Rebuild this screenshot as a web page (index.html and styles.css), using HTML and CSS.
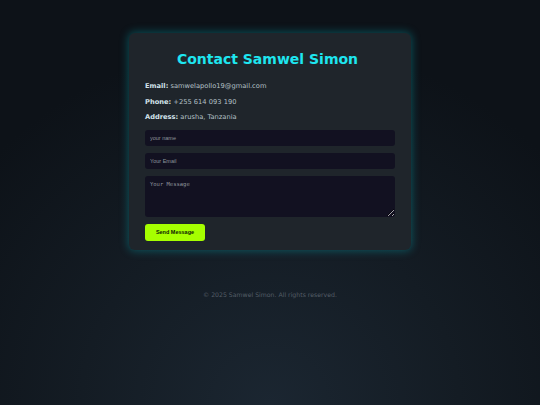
FILE: index.html
```html
<!DOCTYPE html>
<html lang="en">
<head>
<meta charset="utf-8">
<title>Contact Samwel Simon</title>
<link rel="stylesheet" href="styles.css">
</head>
<body>
<main class="page">
  <section class="card">
    <h1 class="title">Contact Samwel Simon</h1>
    <p class="info"><strong>Email:</strong> samwelapollo19@gmail.com</p>
    <p class="info"><strong>Phone:</strong> +255 614 093 190</p>
    <p class="info"><strong>Address:</strong> arusha, Tanzania</p>
    <form class="form">
      <input class="field" type="text" placeholder="your name">
      <input class="field" type="email" placeholder="Your Email">
      <textarea class="field area" placeholder="Your Message"></textarea>
      <button class="send" type="button">Send Message</button>
    </form>
  </section>
  <footer class="footer">© 2025 Samwel Simon. All rights reserved.</footer>
</main>
</body>
</html>
```

FILE: styles.css
```css
html, body {
  margin: 0;
  height: 100%;
}
body {
  background: radial-gradient(ellipse 70% 90% at 50% 100%, #1b2631 0%, #141c24 50%, #0d1218 100%);
  font-family: "DejaVu Sans", Verdana, sans-serif;
  color: #c5d3da;
}
.page {
  display: flex;
  flex-direction: column;
  align-items: center;
  padding-top: 33px;
}
.card {
  width: 250px;
  padding: 16px 16px 9px;
  background: #1f252b;
  border-radius: 6px;
  box-shadow: 0 0 8px 1px rgba(0, 190, 200, 0.35);
}
.title {
  margin: 2px 0 15px;
  padding-right: 5px;
  text-align: center;
  font-size: 14px;
  font-weight: bold;
  color: #1ee6f0;
}
.info {
  margin: 0 0 7px;
  font-size: 6.7px;
  line-height: 8.5px;
  color: #b4c0c7;
}
.info strong {
  color: #d2e2ea;
}
.form {
  display: flex;
  flex-direction: column;
  align-items: flex-start;
  gap: 7px;
  margin-top: 8px;
}
.field {
  box-sizing: border-box;
  width: 250px;
  height: 16px;
  padding: 0 5px;
  border: none;
  border-radius: 3px;
  background: #121121;
  color: #c5d3da;
  font-family: "Liberation Sans", Arial, sans-serif;
  font-size: 5.5px;
  outline: none;
}
.field::placeholder {
  color: #8e949c;
}
.area {
  height: 41px;
  padding: 5px;
  font-family: "DejaVu Sans Mono", monospace;
  font-size: 5.5px;
  resize: vertical;
}
.send {
  width: 60px;
  height: 17px;
  padding: 0;
  border: none;
  border-radius: 3px;
  background: #a6ff00;
  color: #0c1a05;
  font-family: "Liberation Sans", Arial, sans-serif;
  font-size: 5.5px;
  font-weight: bold;
}
.footer {
  margin-top: 41px;
  font-size: 6.2px;
  color: #555e67;
}
```
